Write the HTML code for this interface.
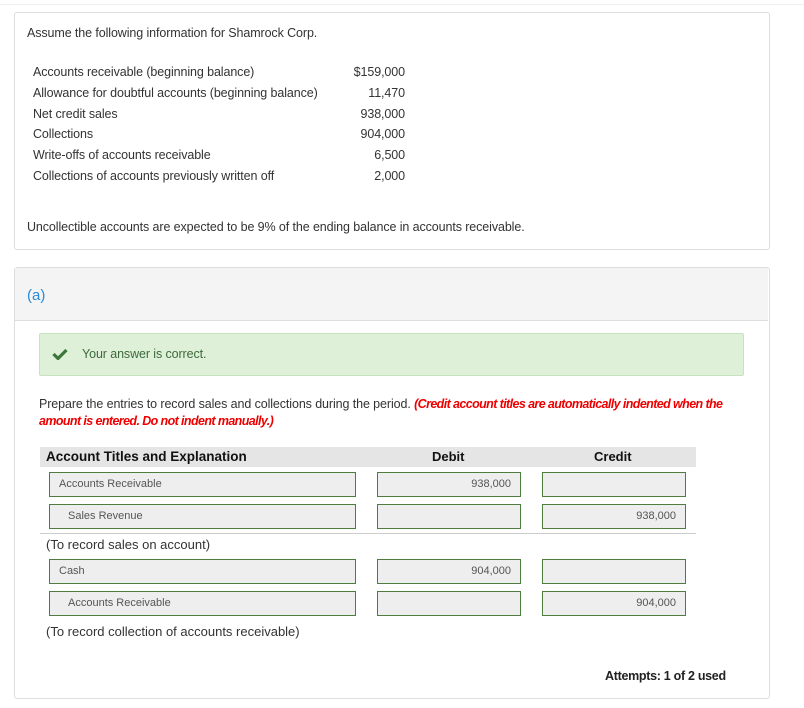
<html><head><style>
body{margin:0;background:#fff;font-family:"Liberation Sans",sans-serif;color:#333;width:804px;height:708px;position:relative;overflow:hidden}
.a{position:absolute}
.card{position:absolute;border:1px solid #ddd;border-radius:3px}
.in{position:absolute;border:1px solid #4e7d3f;background:#eee;height:25px;box-sizing:border-box;font-size:11px;color:#555;line-height:23px}
.t{font-size:12.5px;letter-spacing:-0.1px}
</style></head><body>
<div class="a" style="left:0;top:0;width:804px;height:4px;border-bottom:1px solid #eee"></div>
<div class="card" style="left:14px;top:12px;width:754px;height:236px"></div>
<div class="a t" style="left:27px;top:26px">Assume the following information for Shamrock Corp.</div>
<div class="a t" style="left:33px;top:62px;line-height:20.8px">Accounts receivable (beginning balance)<br>Allowance for doubtful accounts (beginning balance)<br>Net credit sales<br>Collections<br>Write-offs of accounts receivable<br>Collections of accounts previously written off</div>
<div class="a t" style="left:330px;width:75px;text-align:right;top:62px;line-height:20.8px">$159,000<br>11,470<br>938,000<br>904,000<br>6,500<br>2,000</div>
<div class="a t" style="left:27px;top:220px">Uncollectible accounts are expected to be 9% of the ending balance in accounts receivable.</div>

<div class="card" style="left:14px;top:267px;width:754px;height:430px"></div>
<div class="a" style="left:15px;top:268px;width:753px;height:52px;background:#f4f4f4;border-bottom:1px solid #ddd"></div>
<div class="a" style="left:27px;top:287px;color:#2a8ad8;font-size:15px">(a)</div>
<div class="a" style="left:39px;top:333px;width:703px;height:41px;background:#dff0d8;border:1px solid #c7e3bd;border-radius:2px"></div>
<svg class="a" style="left:52px;top:348px" width="16" height="12" viewBox="0 0 16 12"><path d="M1.5 6 L6 10.5 L14.5 2" stroke="#3c763d" stroke-width="3.2" fill="none"/></svg>
<div class="a t" style="left:82px;top:347px;color:#3c6a3c">Your answer is correct.</div>
<div class="a t" style="left:39px;top:396px;width:705px;line-height:17px">Prepare the entries to record sales and collections during the period. <b><i style="color:#e00;letter-spacing:-0.6px">(Credit account titles are automatically indented when the amount is entered. Do not indent manually.)</i></b></div>

<div class="a" style="left:40px;top:447px;width:656px;height:20px;background:#e5e5e5"></div>
<div class="a" style="left:46px;top:449px;font-size:13.5px;font-weight:bold;color:#111">Account Titles and Explanation</div>
<div class="a" style="left:432px;top:449px;font-size:13px;font-weight:bold;color:#111">Debit</div>
<div class="a" style="left:594px;top:449px;font-size:13px;font-weight:bold;color:#111">Credit</div>

<div class="in" style="left:49px;top:472px;width:307px;padding-left:9px">Accounts Receivable</div>
<div class="in" style="left:377px;top:472px;width:144px;text-align:right;padding-right:9px">938,000</div>
<div class="in" style="left:542px;top:472px;width:144px"></div>
<div class="in" style="left:49px;top:504px;width:307px;padding-left:18px">Sales Revenue</div>
<div class="in" style="left:377px;top:504px;width:144px"></div>
<div class="in" style="left:542px;top:504px;width:144px;text-align:right;padding-right:9px">938,000</div>
<div class="a" style="left:40px;top:533px;width:656px;border-top:1px solid #ccc"></div>
<div class="a" style="left:46px;top:537px;font-size:13px">(To record sales on account)</div>

<div class="in" style="left:49px;top:559px;width:307px;padding-left:9px">Cash</div>
<div class="in" style="left:377px;top:559px;width:144px;text-align:right;padding-right:9px">904,000</div>
<div class="in" style="left:542px;top:559px;width:144px"></div>
<div class="in" style="left:49px;top:591px;width:307px;padding-left:18px">Accounts Receivable</div>
<div class="in" style="left:377px;top:591px;width:144px"></div>
<div class="in" style="left:542px;top:591px;width:144px;text-align:right;padding-right:9px">904,000</div>
<div class="a" style="left:46px;top:624px;font-size:13px">(To record collection of accounts receivable)</div>
<div class="a" style="left:605px;top:669px;font-size:12.5px;font-weight:bold;color:#222;letter-spacing:-0.3px">Attempts: 1 of 2 used</div>
</body></html>
